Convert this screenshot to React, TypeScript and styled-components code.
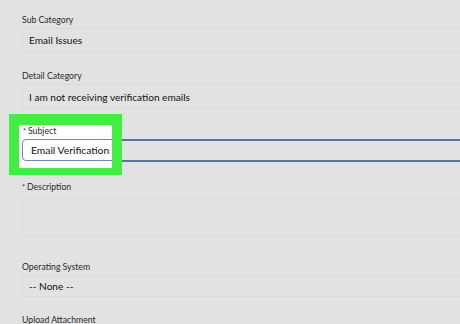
import React from 'react';
import styled, { createGlobalStyle } from 'styled-components';

const Global = createGlobalStyle`
  html, body {
    margin: 0;
    padding: 0;
    background: #e2e2e2;
    overflow: hidden;
  }
  body {
    font-family: Lato, "Open Sans", sans-serif;
    color: #1c1c1c;
  }
`;

const Page = styled.div`
  width: 460px;
  height: 324px;
  padding: 14px 0 0 22px;
  box-sizing: border-box;
  overflow: hidden;
`;

const Block = styled.div<{ $gap?: number; $after?: number }>`
  display: flex;
  flex-direction: column;
  gap: ${(p) => p.$gap ?? 2}px;
  margin-bottom: ${(p) => p.$after ?? 18}px;
  position: relative;
`;

const Label = styled.div`
  font-size: 8.7px;
  line-height: 12px;
  color: #2a2a2a;
  white-space: nowrap;
`;

const Star = styled.span`
  font-size: 7px;
  vertical-align: top;
  margin-right: 2px;
`;

const Field = styled.div<{ $h: number }>`
  height: ${(p) => p.$h}px;
  margin-right: -10px;
  border-top: 1px solid #d8d8d8;
  border-bottom: 1px solid #d8d8d8;
  border-left: 1px solid #dbdbdb;
  box-sizing: border-box;
  display: flex;
  align-items: center;
  padding-left: 6px;
  font-size: 10.1px;
  color: #111;
  white-space: nowrap;
`;

const Area = styled(Field)`
  align-items: flex-start;
`;

const LineInput = styled.div`
  height: 23px;
  margin-right: -10px;
  box-sizing: border-box;
  border-top: 2px solid #57759f;
  border-bottom: 2px solid #57759f;
  box-shadow: inset 0 1px 0 #dbe6f2, inset 0 -1px 0 #dbe6f2;
`;

const Highlight = styled.div`
  position: absolute;
  left: -13px;
  top: -11px;
  width: 113px;
  height: 61px;
  box-sizing: border-box;
  background: #41ee41;
  padding: 11px 10px 7px 10px;
`;

const Card = styled.div`
  background: #ffffff;
  height: 100%;
  display: flex;
  flex-direction: column;
  gap: 2px;
  padding-left: 3px;
  overflow: hidden;
`;

const CardLabel = styled(Label)`
  padding-left: 1px;
`;

const CardInput = styled.div`
  height: 22px;
  margin-right: -4px;
  box-sizing: border-box;
  border: 1px solid #6e8cb6;
  border-radius: 4px 0 0 4px;
  display: flex;
  align-items: center;
  padding-left: 8px;
  font-size: 10.3px;
  color: #111;
  white-space: nowrap;
`;

export default function App() {
  return (
    <Page>
      <Global />
      <Block>
        <Label>Sub Category</Label>
        <Field $h={24}>Email Issues</Field>
      </Block>
      <Block $after={16}>
        <Label>Detail Category</Label>
        <Field $h={25}>I am not receiving verification emails</Field>
      </Block>
      <Block $after={19}>
        <Label>&nbsp;</Label>
        <LineInput />
        <Highlight>
          <Card>
            <CardLabel>
              <Star>*</Star>Subject
            </CardLabel>
            <CardInput>Email Verification</CardInput>
          </Card>
        </Highlight>
      </Block>
      <Block $gap={5} $after={25}>
        <Label>
          <Star>*</Star>Description
        </Label>
        <Area $h={38} />
      </Block>
      <Block $gap={2} $after={17}>
        <Label>Operating System</Label>
        <Field $h={22}>-- None --</Field>
      </Block>
      <Block>
        <Label>Upload Attachment</Label>
      </Block>
    </Page>
  );
}
